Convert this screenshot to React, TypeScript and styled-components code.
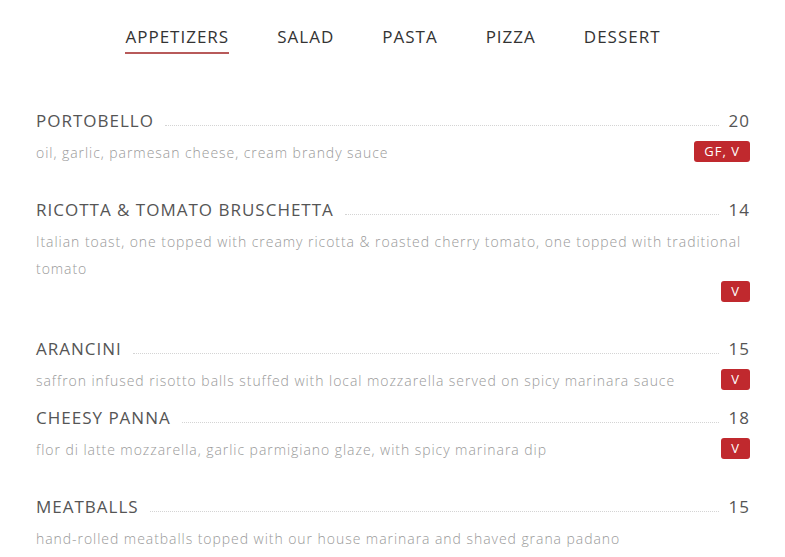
import React from 'react'
import styled, { createGlobalStyle } from 'styled-components'

const GlobalStyle = createGlobalStyle`
    html, body {
        margin: 0;
        padding: 0;
        background: #fff;
    }
    body {
        font-family: 'Open Sans', 'Liberation Sans', sans-serif;
    }
`

const Page = styled.div`
    width: 785px;
    padding: 0 35px 0 36px;
    box-sizing: border-box;
`

const Tabs = styled.ul`
    list-style: none;
    display: flex;
    justify-content: center;
    gap: 48px;
    margin: 0;
    padding: 25px 0 0;
`

const Tab = styled.li<{ $active?: boolean }>`
    font-size: 17px;
    letter-spacing: 1px;
    line-height: 24px;
    color: #333;
    padding-bottom: 3px;
    border-bottom: 2px solid ${(p) => (p.$active ? '#b85a5a' : 'transparent')};
`

const List = styled.div`
    padding-top: 55px;
`

const Item = styled.div<{ $space: number }>`
    margin-bottom: ${(p) => p.$space}px;
`

const Head = styled.div`
    display: flex;
    align-items: baseline;
    height: 24px;
    line-height: 24px;
    font-size: 17px;
    letter-spacing: 1px;
    color: #555;
`

const Name = styled.span`
    white-space: nowrap;
`

const Leader = styled.span`
    flex: 1;
    margin: 0 10px 0 11px;
    border-bottom: 1px dotted #d4d4d4;
    transform: translateY(-1px);
`

const Price = styled.span`
    white-space: nowrap;
`

const Body = styled.div`
    display: flex;
    flex-wrap: wrap;
    align-items: center;
    margin-top: 6px;
`

const Desc = styled.p`
    margin: 0;
    font-size: 14px;
    font-weight: 300;
    letter-spacing: 0.95px;
    line-height: 27px;
    color: #999;
`

const Badge = styled.span`
    margin-left: auto;
    padding: 0 10px;
    height: 21px;
    line-height: 21px;
    border-radius: 3px;
    background: #c0292e;
    color: #fff;
    font-size: 13px;
    letter-spacing: 1px;
    transform: translateY(-1px);
`

interface MenuItem {
    name: string
    price: number
    desc: string
    tags?: string
    space: number
}

const tabs = ['APPETIZERS', 'SALAD', 'PASTA', 'PIZZA', 'DESSERT']

const items: MenuItem[] = [
    {
        name: 'PORTOBELLO',
        price: 20,
        desc: 'oil, garlic, parmesan cheese, cream brandy sauce',
        tags: 'GF, V',
        space: 32,
    },
    {
        name: 'RICOTTA & TOMATO BRUSCHETTA',
        price: 14,
        desc: 'Italian toast, one topped with creamy ricotta & roasted cherry tomato, one topped with traditional tomato',
        tags: 'V',
        space: 34,
    },
    {
        name: 'ARANCINI',
        price: 15,
        desc: 'saffron infused risotto balls stuffed with local mozzarella served on spicy marinara sauce',
        tags: 'V',
        space: 12,
    },
    {
        name: 'CHEESY PANNA',
        price: 18,
        desc: 'flor di latte mozzarella, garlic parmigiano glaze, with spicy marinara dip',
        tags: 'V',
        space: 32,
    },
    {
        name: 'MEATBALLS',
        price: 15,
        desc: 'hand-rolled meatballs topped with our house marinara and shaved grana padano',
        space: 20,
    },
]

export default function App() {
    return (
        <Page>
            <GlobalStyle />
            <Tabs>
                {tabs.map((t, i) => (
                    <Tab key={t} $active={i === 0}>
                        {t}
                    </Tab>
                ))}
            </Tabs>
            <List>
                {items.map((item) => (
                    <Item key={item.name} $space={item.space}>
                        <Head>
                            <Name>{item.name}</Name>
                            <Leader />
                            <Price>{item.price}</Price>
                        </Head>
                        <Body>
                            <Desc>{item.desc}</Desc>
                            {item.tags && <Badge>{item.tags}</Badge>}
                        </Body>
                    </Item>
                ))}
            </List>
        </Page>
    )
}
